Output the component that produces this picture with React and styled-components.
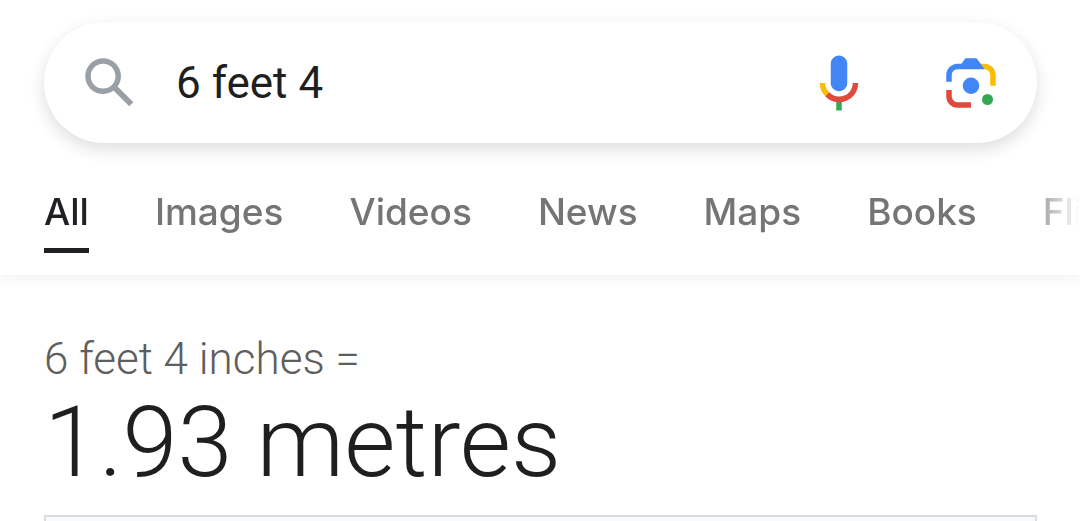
import React from 'react';
import styled, { createGlobalStyle, css, ThemeProvider } from 'styled-components';

const theme = {
  colors: {
    text: '#202124',
    result: '#1f1f1f',
    muted: '#757575',
    source: '#5e5e5e',
    icon: '#9aa0a6',
    border: '#dadce0',
    panel: '#f8f9fc',
    blue: '#4285f4',
    red: '#e14a3b',
    yellow: '#fbbc04',
    green: '#34a853',
  },
};

const GlobalStyle = createGlobalStyle`
  * { box-sizing: border-box; }

  body {
    margin: 0;
    background-color: white;
    font-family: Roboto, sans-serif;
    -webkit-font-smoothing: antialiased;
  }
`;

const Page = styled.div`
  display: flex;
  flex-direction: column;
  min-height: 100vh;
`;

const Header = styled.header`
  padding-top: 22px;
  box-shadow: 0 2px 14px 0 rgba(32, 33, 36, 0.07);
`;

const SearchForm = styled.form`
  display: flex;
  align-items: center;
  height: 121px;
  margin: 0 43px 0 44px;
  padding: 0 33px;
  border-radius: 61px;
  background-color: white;
  box-shadow: 0 6px 16px 0 rgba(32, 33, 36, 0.15);
`;

const IconButton = styled.button`
  flex: none;
  width: 66px;
  height: 66px;
  padding: 0;
  border: none;
  background: none;
  cursor: pointer;

  & + & { margin-left: 66px; }
`;

const Icon = styled.svg`
  display: block;
  width: 100%;
  height: 100%;
`;

const SearchInput = styled.input`
  flex: 1;
  min-width: 0;
  margin: 0 33px;
  padding: 0;
  border: none;
  outline: none;
  background: none;
  color: ${props => props.theme.colors.result};
  font-family: inherit;
  font-size: 44px;
  line-height: 60px;
`;

const Tabs = styled.nav`
  display: flex;
  gap: 66px;
  height: 132px;
  padding: 44px 0 0 44px;
  overflow: hidden;
  mask-image: linear-gradient(to left, transparent, black 60px);
`;

const Tab = styled.a`
  flex: none;
  height: 66px;
  color: ${props => props.theme.colors.muted};
  font-family: Inter, sans-serif;
  font-size: 37px;
  font-weight: 500;
  line-height: 50px;
  text-decoration: none;

  ${props => props.$active && css`
    color: ${props.theme.colors.text};
    border-bottom: 5px solid ${props.theme.colors.text};
  `};
`;

const Result = styled.main`
  display: flex;
  flex: 1;
  flex-direction: column;
  padding: 56px 43px 0 44px;
`;

const Source = styled.div`
  color: ${props => props.theme.colors.source};
  font-size: 44px;
  font-weight: 300;
  line-height: 56px;
`;

const Answer = styled.div`
  color: ${props => props.theme.colors.result};
  font-size: 99px;
  font-weight: 300;
  line-height: 110px;
`;

const Converter = styled.section`
  flex: 1;
  margin-top: 18px;
  border: 2px solid ${props => props.theme.colors.border};
  border-bottom: none;
  background-color: ${props => props.theme.colors.panel};
`;

const SearchIcon = () => (
  <Icon viewBox="0 0 24 24" fill={theme.colors.icon}>
    <path d="M20.49 19l-5.73-5.73C15.53 12.2 16 10.91 16 9.5 16 5.91 13.09 3 9.5 3S3 5.91 3 9.5 5.91 16 9.5 16c1.41 0 2.7-.47 3.77-1.24L19 20.49 20.49 19zM5 9.5C5 7.01 7.01 5 9.5 5S14 7.01 14 9.5 11.99 14 9.5 14 5 11.99 5 9.5z" />
  </Icon>
);

const MicIcon = () => (
  <Icon viewBox="0 0 24 24">
    <path fill={theme.colors.blue} d="M12 15c1.66 0 3-1.31 3-2.97V5.01C15 3.35 13.66 2 12 2S9 3.34 9 5.01v7.02C9 13.69 10.34 15 12 15z" />
    <path fill={theme.colors.green} d="M11 18.08h2V22h-2z" />
    <path fill={theme.colors.yellow} d="M7.05 16.87C5.78 15.54 5 14.04 5 12h2c0 1.45.56 2.42 1.47 3.38v.32l-1.15 1.18z" />
    <path fill={theme.colors.red} d="M12 16.93a4.97 5.25 0 0 1-3.54-1.55l-1.41 1.49C8.31 18.21 10.07 19 12 19c3.87 0 6.99-2.92 6.99-7H17c0 2.92-2.24 4.93-5 4.93z" />
  </Icon>
);

const LensIcon = () => (
  <Icon viewBox="0 0 192 192">
    <circle fill={theme.colors.green} cx="144" cy="144" r="16" />
    <circle fill={theme.colors.blue} cx="96" cy="104" r="24" />
    <path fill={theme.colors.red} d="M24 135.2C24 153.31 38.69 168 56.8 168H96v-16l-40.1-.1c-8.8 0-15.9-8.19-15.9-17.9v-18H24v19.2z" />
    <path fill={theme.colors.yellow} d="M168 72.8c0-18.11-14.69-32.8-32.8-32.8H116l20 16c8.8 0 16 8.29 16 18v30h16V72.8z" />
    <path fill={theme.colors.blue} d="M112 24H80L68 40H56.8C38.69 40 24 54.69 24 72.8V92h16V74c0-9.71 7.2-18 16-18h80l-24-32z" />
  </Icon>
);

const tabs = ['All', 'Images', 'Videos', 'News', 'Maps', 'Books', 'Flights'];

const App = () => (
  <ThemeProvider theme={theme}>
    <GlobalStyle />
    <Page>
      <Header>
        <SearchForm role="search" onSubmit={e => e.preventDefault()}>
          <IconButton type="submit" aria-label="Search"><SearchIcon /></IconButton>
          <SearchInput type="text" aria-label="Search query" defaultValue="6 feet 4" />
          <IconButton type="button" aria-label="Search by voice"><MicIcon /></IconButton>
          <IconButton type="button" aria-label="Search by image"><LensIcon /></IconButton>
        </SearchForm>
        <Tabs>
          {tabs.map((tab, i) => (
            <Tab key={tab} href={`#${tab.toLowerCase()}`} $active={i === 0}>{tab}</Tab>
          ))}
        </Tabs>
      </Header>
      <Result>
        <Source>6 feet 4 inches =</Source>
        <Answer>1.93 metres</Answer>
        <Converter aria-label="Unit converter" />
      </Result>
    </Page>
  </ThemeProvider>
);

export default App;
